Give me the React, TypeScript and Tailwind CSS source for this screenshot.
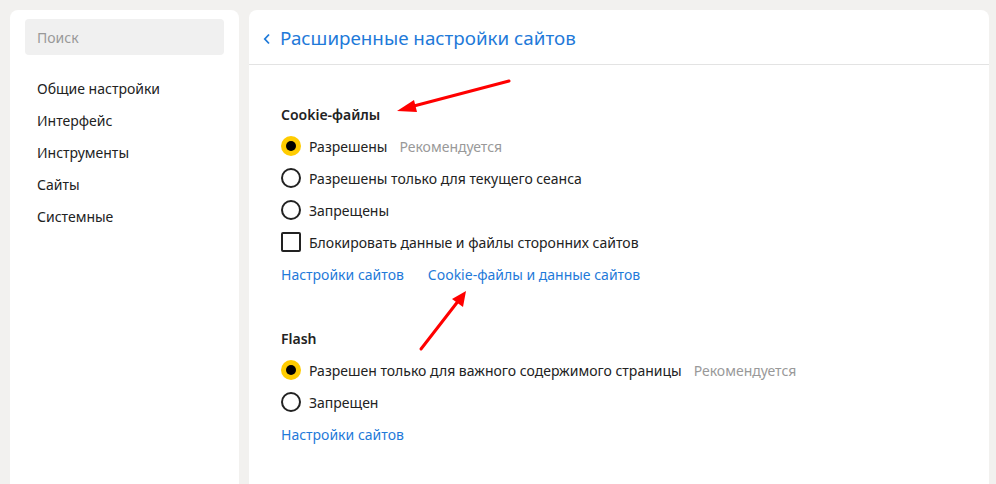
import React from 'react';

const font = { fontFamily: '"Noto Sans", "Open Sans", sans-serif' };

const Radio: React.FC<{ checked?: boolean; label: string; note?: string }> = ({ checked, label, note }) => (
  <div className="flex items-center h-8">
    {checked ? (
      <span className="w-5 h-5 rounded-full bg-[#ffcc00] flex items-center justify-center">
        <span className="w-2.5 h-2.5 rounded-full bg-black" />
      </span>
    ) : (
      <span className="w-5 h-5 rounded-full border-2 border-[#222]" />
    )}
    <span className="ml-2 text-[14px] text-[#222]">{label}</span>
    {note && <span className="ml-3 text-[14px] text-[#999]">{note}</span>}
  </div>
);

const Checkbox: React.FC<{ label: string }> = ({ label }) => (
  <div className="flex items-center h-8">
    <span className="w-5 h-5 rounded-[2px] border-2 border-[#222]" />
    <span className="ml-2 text-[14px] text-[#222]">{label}</span>
  </div>
);

const App: React.FC = () => {
  const menu = ['Общие настройки', 'Интерфейс', 'Инструменты', 'Сайты', 'Системные'];

  return (
    <div className="relative w-[996px] h-[484px] bg-[#f2f1ef] overflow-hidden flex gap-[10px] pt-[10px] pl-[10px] pr-[7px]" style={font}>
      <aside className="w-[229px] bg-white rounded-t-[8px] px-[15px] pt-[9px]">
        <div className="h-9 rounded-[4px] bg-[#f0f0f0] flex items-center px-3 text-[14px] text-[#999]">Поиск</div>
        <ul className="mt-[17px]">
          {menu.map((m) => (
            <li key={m} className="h-8 flex items-center px-3 text-[14px] text-[#222]">{m}</li>
          ))}
        </ul>
      </aside>

      <main className="flex-1 bg-white rounded-t-[8px]">
        <div className="h-[55px] pt-[3px] flex items-center pl-[14px] border-b border-[#e3e3e3] text-[#1f7ad9]">
          <svg width="8" height="12" viewBox="0 0 8 12" className="mr-[9px]">
            <path d="M6 1.5 L1.8 6 L6 10.5" fill="none" stroke="currentColor" strokeWidth="1.8" />
          </svg>
          <span className="text-[18.8px]">Расширенные настройки сайтов</span>
        </div>

        <div className="pl-[32px] pt-[33px]">
          <div className="h-8 flex items-center text-[14px] font-semibold text-[#222]">Cookie-файлы</div>
          <Radio checked label="Разрешены" note="Рекомендуется" />
          <Radio label="Разрешены только для текущего сеанса" />
          <Radio label="Запрещены" />
          <Checkbox label="Блокировать данные и файлы сторонних сайтов" />
          <div className="h-8 flex items-center gap-6 text-[14px] text-[#1f7ad9]">
            <span>Настройки сайтов</span>
            <span>Cookie-файлы и данные сайтов</span>
          </div>

          <div className="h-8 mt-8 flex items-center text-[14px] font-semibold text-[#222]">Flash</div>
          <Radio checked label="Разрешен только для важного содержимого страницы" note="Рекомендуется" />
          <Radio label="Запрещен" />
          <div className="h-8 flex items-center text-[14px] text-[#1f7ad9]">
            <span>Настройки сайтов</span>
          </div>
        </div>
      </main>

      <svg className="absolute inset-0 pointer-events-none" width="996" height="484">
        <line x1="509" y1="81" x2="410" y2="107" stroke="#ff0000" strokeWidth="3" strokeLinecap="round" />
        <polygon points="397,111 414,100 417,112" fill="#ff0000" />
        <line x1="421" y1="349" x2="459" y2="300" stroke="#ff0000" strokeWidth="3" strokeLinecap="round" />
        <polygon points="466,291 452,299 463,307" fill="#ff0000" />
      </svg>
    </div>
  );
};

export default App;
